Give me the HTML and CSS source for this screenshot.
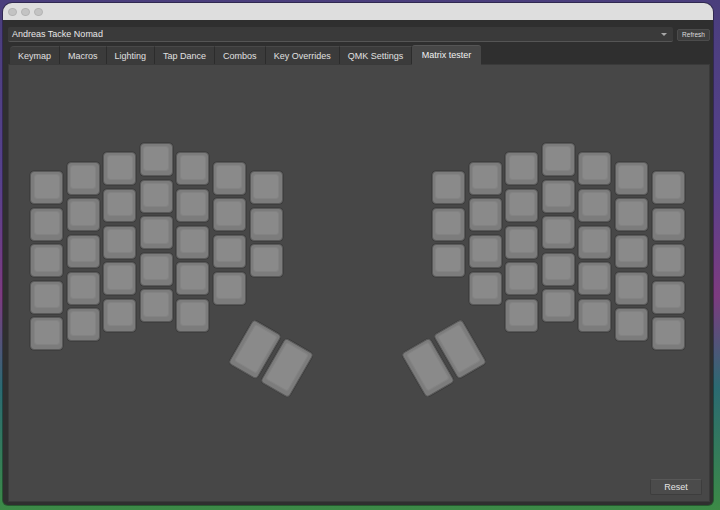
FILE: index.html
```html
<!DOCTYPE html>
<html>
<head>
<meta charset="utf-8">
<link rel="stylesheet" href="styles.css">
</head>
<body>
<div class="window">
  <div class="titlebar">
    <span class="light"></span><span class="light"></span><span class="light"></span>
  </div>
  <div class="body">
    <div class="toprow">
      <div class="combo"><span class="combo-text">Andreas Tacke Nomad</span><span class="arrow"></span></div>
      <button class="refresh">Refresh</button>
    </div>
    <div class="tabs">
      <div class="tab">Keymap</div>
      <div class="tab">Macros</div>
      <div class="tab">Lighting</div>
      <div class="tab">Tap Dance</div>
      <div class="tab">Combos</div>
      <div class="tab">Key Overrides</div>
      <div class="tab">QMK Settings</div>
      <div class="tab active">Matrix tester</div>
    </div>
    <div class="panel">
      <div class="board">
        <div class="half">
          <div class="col o3"><div class="key"></div><div class="key"></div><div class="key"></div><div class="key"></div><div class="key"></div></div>
          <div class="col o2"><div class="key"></div><div class="key"></div><div class="key"></div><div class="key"></div><div class="key"></div></div>
          <div class="col o1"><div class="key"></div><div class="key"></div><div class="key"></div><div class="key"></div><div class="key"></div></div>
          <div class="col o0"><div class="key"></div><div class="key"></div><div class="key"></div><div class="key"></div><div class="key"></div></div>
          <div class="col o1"><div class="key"></div><div class="key"></div><div class="key"></div><div class="key"></div><div class="key"></div></div>
          <div class="col o2"><div class="key"></div><div class="key"></div><div class="key"></div><div class="key"></div></div>
          <div class="col o3"><div class="key"></div><div class="key"></div><div class="key"></div></div>
        </div>
        <div class="half">
          <div class="col o3"><div class="key"></div><div class="key"></div><div class="key"></div></div>
          <div class="col o2"><div class="key"></div><div class="key"></div><div class="key"></div><div class="key"></div></div>
          <div class="col o1"><div class="key"></div><div class="key"></div><div class="key"></div><div class="key"></div><div class="key"></div></div>
          <div class="col o0"><div class="key"></div><div class="key"></div><div class="key"></div><div class="key"></div><div class="key"></div></div>
          <div class="col o1"><div class="key"></div><div class="key"></div><div class="key"></div><div class="key"></div><div class="key"></div></div>
          <div class="col o2"><div class="key"></div><div class="key"></div><div class="key"></div><div class="key"></div><div class="key"></div></div>
          <div class="col o3"><div class="key"></div><div class="key"></div><div class="key"></div><div class="key"></div><div class="key"></div></div>
        </div>
      </div>
      <div class="thumbs thumbs-left"><div class="key tall"></div><div class="key tall"></div></div>
      <div class="thumbs thumbs-right"><div class="key tall"></div><div class="key tall"></div></div>
      <div class="footer"><button class="reset">Reset</button></div>
    </div>
  </div>
</div>
</body>
</html>
```
FILE: styles.css
```css
* { box-sizing: border-box; }
html, body { margin: 0; padding: 0; }
body {
  width: 720px;
  height: 510px;
  overflow: hidden;
  padding: 3px 7px 5px 3px;
  font-family: "Liberation Sans", Arial, sans-serif;
  background: linear-gradient(180deg, #4a3e7c 0%, #56418c 35%, #7d3b80 58%, #2b6a72 76%, #3c8a46 100%);
}
.window {
  width: 710px;
  height: 502px;
  border-radius: 9px 9px 5px 5px;
  overflow: hidden;
  background: #2f2f2f;
  display: flex;
  flex-direction: column;
  box-shadow: 0 0 0 1px rgba(0,0,0,0.35);
}
.titlebar {
  height: 17px;
  flex: none;
  background: #dedede;
  display: flex;
  align-items: center;
  gap: 4.5px;
  padding: 1px 0 0 5px;
}
.light {
  width: 8.5px;
  height: 8.5px;
  border-radius: 50%;
  background: #c3c3c3;
  border: 0.5px solid #b3b3b3;
}
.body {
  flex: 1;
  display: flex;
  flex-direction: column;
  padding: 7px 3px 3px 5px;
  min-height: 0;
}
.toprow {
  display: flex;
  align-items: center;
  height: 15px;
  flex: none;
}
.combo {
  flex: 1;
  height: 15px;
  background: #3a3a3a;
  border-bottom: 1px solid #555;
  border-radius: 2px;
  display: flex;
  align-items: center;
  padding: 0 0 0 4px;
  color: #e8e8e8;
  font-size: 9px;
}
.combo-text { flex: 1; }
.arrow {
  width: 0;
  height: 0;
  border-left: 3px solid transparent;
  border-right: 3px solid transparent;
  border-top: 3px solid #a8a8a8;
  margin-right: 6px;
}
.refresh {
  margin-left: 4px;
  width: 33px;
  height: 12px;
  padding: 0;
  background: #3e3e3e;
  border: 1px solid #4c4c4c;
  border-radius: 2px;
  color: #dcdcdc;
  font-family: "Liberation Sans", Arial, sans-serif;
  font-size: 6.5px;
  line-height: 10px;
}
.tabs {
  display: flex;
  align-items: flex-end;
  height: 22px;
  flex: none;
  padding-left: 2px;
}
.tab {
  height: 18px;
  padding: 0 8px;
  background: #3b3b3b;
  border-top: 1px solid #484848;
  border-right: 1px solid #2c2c2c;
  color: #e0e0e0;
  font-size: 9px;
  line-height: 18px;
  white-space: nowrap;
}
.tab:first-child { border-radius: 4px 0 0 0; }
.tab.active {
  height: 20px;
  background: #474747;
  border-top: 1px solid #555;
  border-right: none;
  border-radius: 3px 3px 0 0;
  color: #f2f2f2;
  line-height: 18px;
  padding: 0 9.5px;
  margin-bottom: -1px;
  position: relative;
  z-index: 1;
}
.panel {
  flex: 1;
  position: relative;
  background: #474747;
  border: 1px solid #3a3a3a;
  display: flex;
  flex-direction: column;
  min-height: 0;
}
.board {
  display: flex;
  gap: 149.4px;
  padding: 78px 0 0 21px;
}
.half {
  display: flex;
  gap: 3.6px;
  align-items: flex-start;
}
.col {
  display: flex;
  flex-direction: column;
  gap: 3.6px;
}
.o0 { margin-top: 0; }
.o1 { margin-top: 9.4px; }
.o2 { margin-top: 18.8px; }
.o3 { margin-top: 28px; }
.key {
  width: 33px;
  height: 33px;
  border-radius: 4px;
  background: #7c7c7c;
  border: 1px solid #595959;
  box-shadow: 0 0 0 0.5px rgba(0,0,0,0.25);
  position: relative;
  flex: none;
}
.key::after {
  content: "";
  position: absolute;
  top: 2px;
  left: 2.5px;
  right: 2.5px;
  bottom: 4.5px;
  border-radius: 3px;
  background: #8a8a8a;
  border: 1px solid #838383;
}
.key.tall { height: 51px; }
.thumbs {
  position: absolute;
  display: flex;
  gap: 3.6px;
  width: 69.6px;
  height: 51px;
  top: 267.6px;
}
.thumbs-left { left: 227px; transform: rotate(30deg); }
.thumbs-right { left: 400.4px; transform: rotate(-30deg); }
.footer {
  margin-top: auto;
  display: flex;
  justify-content: flex-end;
  padding: 0 7px 6px 0;
}
.reset {
  width: 52px;
  height: 16px;
  padding: 0;
  background: #4b4b4b;
  border: 1px solid #3d3d3d;
  border-top-color: #575757;
  border-radius: 2px;
  color: #e4e4e4;
  font-family: "Liberation Sans", Arial, sans-serif;
  font-size: 9px;
  line-height: 14px;
}
```
